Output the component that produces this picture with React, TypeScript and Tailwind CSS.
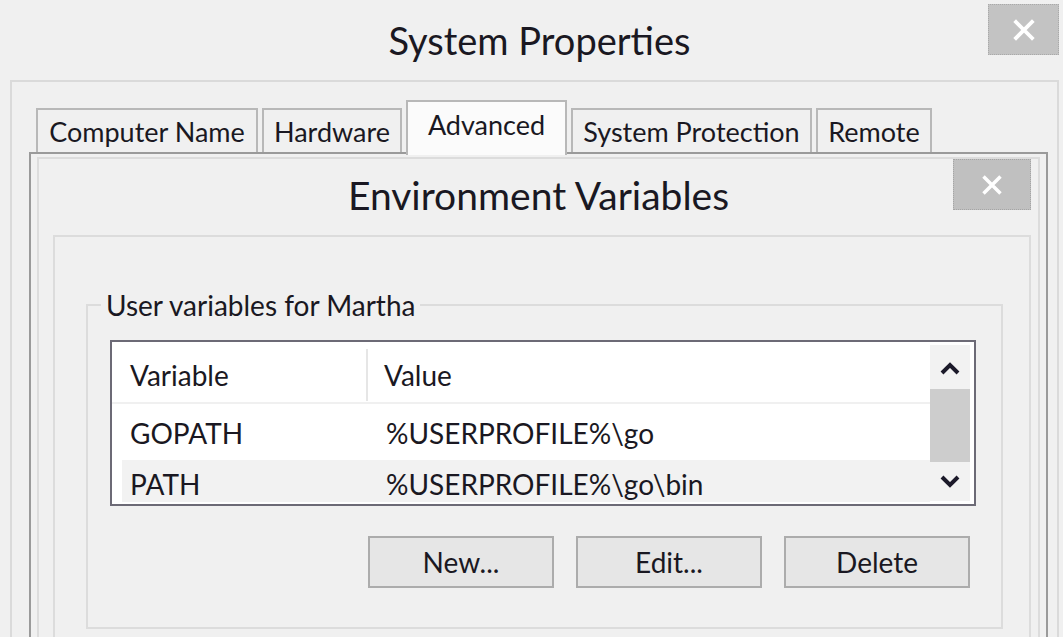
import React from "react";

function CloseX({ size = 22 }: { size?: number }) {
  return (
    <svg width={size} height={size} viewBox="0 0 22 22">
      <path d="M3 3 L19 19 M19 3 L3 19" stroke="#ffffff" strokeWidth="3.8" strokeLinecap="square" />
    </svg>
  );
}

function Chevron({ up }: { up?: boolean }) {
  return (
    <svg width="22" height="14" viewBox="0 0 22 14">
      <path
        d={up ? "M3 12 L11 4 L19 12" : "M3 2 L11 10 L19 2"}
        stroke="#1c1a2a"
        strokeWidth="4"
        fill="none"
      />
    </svg>
  );
}

const tabs = [
  { label: "Computer Name", w: "w-[222px]" },
  { label: "Hardware", w: "w-[140px]" },
  { label: "Advanced", w: "w-[161px]" },
  { label: "System Protection", w: "w-[241px]" },
  { label: "Remote", w: "w-[116px]" },
];

const rows = [
  { name: "GOPATH", value: "%USERPROFILE%\\go", h: "h-[56px] pt-[2px]", selected: false },
  { name: "PATH", value: "%USERPROFILE%\\go\\bin", h: "h-[42px] pt-[6px]", selected: true },
];

export default function App() {
  return (
    <div
      className="w-[1063px] h-[637px] overflow-hidden bg-[#f0f0f0] text-[#1a1822] flex flex-col"
      style={{ fontFamily: "'Segoe UI', Lato, 'Open Sans', sans-serif" }}
    >
      {/* System Properties title bar */}
      <div className="relative h-[80px] flex items-center justify-center pl-[16px] shrink-0">
        <span className="text-[38px] leading-none">System Properties</span>
        <div className="absolute right-[4px] top-[4px] w-[71px] h-[51px] bg-[#c3c3c3] border border-dotted border-[#a9a9a9] flex items-center justify-center">
          <CloseX />
        </div>
      </div>

      {/* content frame */}
      <div className="flex-1 ml-[10px] mr-[4px] border-t-2 border-l-2 border-r-2 border-[#dadada] flex flex-col">
        {/* tabs */}
        <div className="h-[70px] flex items-end gap-[4px] pl-[24px] shrink-0">
          {tabs.map((t) =>
            t.label === "Advanced" ? (
              <div
                key={t.label}
                className={`${t.w} relative z-10 -mb-[3px] h-[55px] bg-[#fbfbfb] border-t-2 border-l-2 border-r-2 border-[#b8b8b8] flex justify-center items-start pt-[6px] text-[27px] leading-[34px]`}
              >
                {t.label}
              </div>
            ) : (
              <div
                key={t.label}
                className={`${t.w} h-[44px] bg-[#f0f0f0] border-t-2 border-l-2 border-r-2 border-[#b8b8b8] flex justify-center items-center text-[27px] leading-none`}
              >
                {t.label}
              </div>
            )
          )}
        </div>

        {/* tab panel holding the Environment Variables dialog */}
        <div className="flex-1 ml-[17px] mr-[9px] border-t-2 border-l-2 border-r-2 border-[#9a9a9a] px-[6px] pt-[3px] flex flex-col">
          <div className="flex-1 border-t-2 border-l-2 border-r-2 border-[#dcdcdc] flex flex-col">
            {/* dialog title */}
            <div className="relative h-[76px] flex items-center justify-center pb-[3px] shrink-0">
              <span className="text-[39px] leading-none">Environment Variables</span>
              <div className="absolute right-[7px] top-[0px] w-[78px] h-[51px] bg-[#c0c0c0] border border-dotted border-[#a5a5a5] flex items-center justify-center">
                <CloseX size={20} />
              </div>
            </div>

            {/* inner panel */}
            <div className="flex-1 ml-[14px] mr-[7px] border-t-2 border-l-2 border-r-2 border-[#dcdcdc] pl-[31px] pr-[26px] pt-[51px]">
              <fieldset className="border-2 border-[#dcdcdc] pl-[22px] pr-[25px] pb-[39px]">
                <legend className="-ml-[9px] px-[5px] text-[28px] leading-[34px]">User variables for Martha</legend>

                {/* list view */}
                <div className="mt-[18px] h-[166px] border-2 border-[#6c6a76] bg-white flex">
                  <div className="flex-1 flex flex-col text-[28px] leading-none">
                    <div className="h-[62px] flex items-center pt-[6px] border-b-2 border-[#f0f0f0]">
                      <div className="w-[256px] h-[52px] pl-[18px] flex items-center border-r-2 border-[#e6e6e6]">
                        Variable
                      </div>
                      <div className="pl-[16px]">Value</div>
                    </div>
                    {rows.map((r) => (
                      <div
                        key={r.name}
                        className={`${r.h} flex items-center ${r.selected ? "bg-[#f2f2f2] ml-[10px]" : ""}`}
                      >
                        <div className={`${r.selected ? "w-[246px] pl-[8px]" : "w-[256px] pl-[18px]"}`}>{r.name}</div>
                        <div className="pl-[18px]">{r.value}</div>
                      </div>
                    ))}
                  </div>

                  {/* scrollbar */}
                  <div className="w-[40px] mr-[4px] my-[3px] flex flex-col">
                    <div className="h-[44px] bg-[#f2f2f2] flex items-center justify-center pt-[2px]">
                      <Chevron up />
                    </div>
                    <div className="h-[73px] bg-[#cdcdcd]" />
                    <div className="flex-1 bg-[#f2f2f2] flex items-center justify-center">
                      <Chevron />
                    </div>
                  </div>
                </div>

                {/* buttons */}
                <div className="mt-[30px] flex justify-end gap-[22px] pr-[6px]">
                  {["New...", "Edit...", "Delete"].map((b) => (
                    <div
                      key={b}
                      className="w-[186px] h-[52px] bg-[#e6e6e6] border-2 border-[#acacac] flex items-center justify-center text-[28px] leading-none"
                    >
                      {b}
                    </div>
                  ))}
                </div>
              </fieldset>
            </div>
          </div>
        </div>
      </div>
    </div>
  );
}
